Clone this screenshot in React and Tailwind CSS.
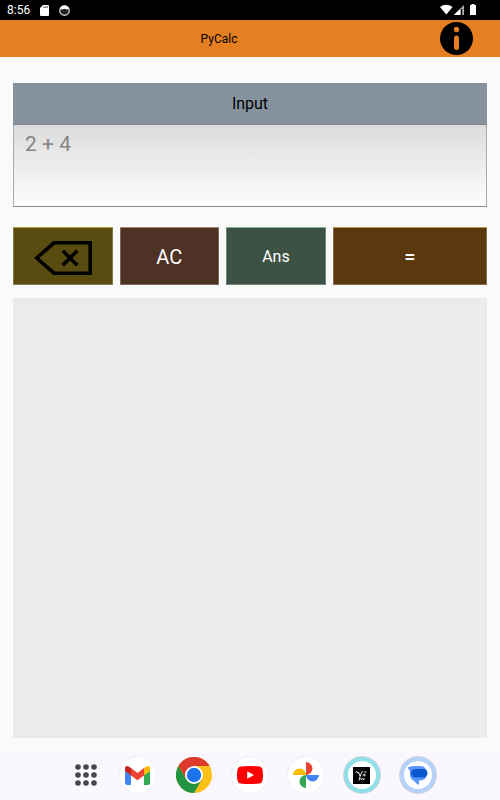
import React, { useState } from 'react';

const StatusBar = () => (
    <div className="flex h-5 items-center justify-between bg-black pl-[7px] pr-6 text-white">
        <div className="flex items-center gap-[10px]">
            <span className="text-[12px] leading-5">8:56</span>
            <svg className="h-[11px] w-[9px]" viewBox="0 0 9 11">
                <path d="M3 0H8Q9 0 9 1V10Q9 11 8 11H1Q0 11 0 10V3Z" fill="#fff" />
                <path d="M4 1.3V3M5.7 1.3V3M7.3 1.3V3" stroke="#222" strokeWidth=".8" />
            </svg>
            <svg className="h-[11px] w-[11px]" viewBox="0 0 11 11">
                <circle cx="5.5" cy="5.5" r="4.7" fill="#222" stroke="#ccc" strokeWidth="1.4" />
                <path d="M1 4A4.8 4.8 0 0 1 10 4L7.5 4.6L5.5 3.8L3.5 4.6Z" fill="#fff" />
            </svg>
        </div>
        <svg className="h-3 w-9" viewBox="0 0 36 12" fill="#fff">
            <path d="M0 3Q6-1.6 12.6 3L6.3 10.5Z" />
            <path d="M14 11L24 1V11Z" fill="#aaa" />
            <path d="M14 11L20.5 4.5V11Z" />
            <path d="M21.5 5V11" stroke="#000" strokeWidth="1.4" />
            <path d="M31.5 0H34.5V1H35.5Q36 1 36 1.5V10.5Q36 11 35.5 11H30.5Q30 11 30 10.5V1.5Q30 1 30.5 1H31.5Z" />
        </svg>
    </div>
);

const Header = () => (
    <header className="flex h-[37px] items-center bg-[#e67f22] pr-[27px]">
        <h1 className="flex-1 pr-[2px] text-center text-[12px] leading-4 text-black">PyCalc</h1>
        <button type="button" aria-label="About">
            <svg className="block h-[33px] w-[33px]" viewBox="0 0 33 33">
                <circle cx="16.5" cy="16.5" r="16.5" />
                <circle cx="16.5" cy="7.5" r="2.7" fill="#e67f22" />
                <rect x="14" y="13.5" width="5" height="14.5" rx="2.5" fill="#e67f22" />
            </svg>
        </button>
    </header>
);

const BackspaceIcon = () => (
    <svg className="h-[34px] w-[58px]" viewBox="0 0 58 34" fill="none" stroke="#000">
        <path d="M2.7 17L20 1.8H56.2V32.2H20Z" strokeWidth="3.6" />
        <path d="M30 11L42 23M42 11L30 23" strokeWidth="3.6" strokeLinecap="square" />
    </svg>
);

const GmailIcon = () => (
    <svg className="h-[19px] w-[25px]" viewBox="0 0 25 19">
        <path d="M0 5L6 9V19H2Q0 19 0 17Z" fill="#4285f4" />
        <path d="M19 9L25 5V17Q25 19 23 19H19Z" fill="#34a853" />
        <path d="M19 2L20.5 1Q25-1.5 25 3V5L19 9.5Z" fill="#fbbc04" />
        <path d="M6 2L12.5 7L19 2V9.5L12.5 14.2L6 9.5Z" fill="#ea4335" />
        <path d="M6 2L4.5 1Q0-1.5 0 3V5L6 9.5Z" fill="#c5221f" />
    </svg>
);

const ChromeIcon = () => (
    <svg className="h-9 w-9" viewBox="0 0 36 36">
        <circle cx="18" cy="18" r="18" fill="#fbc116" />
        <path d="M18 9H33.6A18 18 0 0 0 2.4 9L10.2 22.5Z" fill="#db3a2c" />
        <path d="M10.2 22.5L2.4 9A18 18 0 0 0 18 36L25.8 22.5Z" fill="#229342" />
        <circle cx="18" cy="18" r="9" fill="#fff" />
        <circle cx="18" cy="18" r="7.2" fill="#1a73e8" />
    </svg>
);

const YoutubeIcon = () => (
    <svg className="h-[18px] w-[26px]" viewBox="0 0 26 18">
        <path d="M3.5.5Q13-.5 22.5.5Q25 .8 25.5 3.5Q26.5 9 25.5 14.5Q25 17.2 22.5 17.5Q13 18.5 3.5 17.5Q1 17.2.5 14.5Q-.5 9 .5 3.5Q1 .8 3.5.5Z" fill="#f00" />
        <path d="M10.2 5.2L17 9L10.2 12.8Z" fill="#fff" />
    </svg>
);

const PhotosIcon = () => (
    <svg className="h-[26px] w-[26px]" viewBox="0 0 26 26">
        <path d="M13 0A6.5 6.5 0 0 1 13 13Z" fill="#ea4335" />
        <path d="M26 13A6.5 6.5 0 0 1 13 13Z" fill="#4285f4" />
        <path d="M13 26A6.5 6.5 0 0 1 13 13Z" fill="#34a853" />
        <path d="M0 13A6.5 6.5 0 0 1 13 13Z" fill="#fbbc04" />
    </svg>
);

const PyCalcIcon = () => (
    <svg className="h-[17px] w-[17px]" viewBox="0 0 17 17" fill="none" stroke="#fff">
        <rect width="17" height="17" fill="#000" stroke="none" />
        <path d="M2.5 5.5L4 4.5L5 6.5M5.5 5L7 9L9.5 4M7.5 8L6 13.5" strokeWidth=".9" />
        <path d="M11 5H13.5M9.5 8H13M11.2 6.5V9.5M7.5 11L8.5 13L9.5 11.5L11 13V11" strokeWidth=".8" />
    </svg>
);

const MessagesIcon = () => (
    <svg className="h-[19px] w-5" viewBox="0 0 20 19">
        <path d="M6.5 0H12.5Q18.5 0 18.5 6.5V8Q18.5 14.5 12 14.5H11V18Q10.5 19 9.5 18.5L5.5 14.5Q2 12.5 2 8.5V5L.5 3Q-.5 1 1.5.8Q4 0 6.5 0Z" fill="#5c94ff" />
        <rect x="3" y="3" width="16.5" height="8.5" rx="4.2" fill="#0b57d0" />
    </svg>
);

const dockApps = [
    { name: 'Gmail', icon: GmailIcon, disc: 'h-9 w-9 bg-white ring-1 ring-[#f0eef3]' },
    { name: 'Chrome', icon: ChromeIcon, disc: 'h-9 w-9' },
    { name: 'YouTube', icon: YoutubeIcon, disc: 'h-9 w-9 bg-white ring-1 ring-[#f0eef3]' },
    { name: 'Photos', icon: PhotosIcon, disc: 'h-9 w-9 bg-white ring-1 ring-[#f0eef3]' },
    { name: 'PyCalc', icon: PyCalcIcon, disc: 'h-9 w-9 border-4 border-[#8edfe6] bg-white ring-1 ring-[#cfd4dc]' },
    { name: 'Messages', icon: MessagesIcon, disc: 'h-9 w-9 border-4 border-[#b5d0fb] bg-white ring-1 ring-[#cfd4dc]' },
];

const Dock = () => (
    <nav className="flex items-center justify-center bg-[#faf7ff] py-[5px] pl-3">
        <button type="button" aria-label="All apps" className="mr-[21px]">
            <svg className="h-[22px] w-[22px]" viewBox="0 0 22 22" fill="#45464f">
                {[3, 11, 19].map((y) => [3, 11, 19].map((x) => (
                    <circle key={`${x}-${y}`} cx={x} cy={y} r="2.8" />
                )))}
            </svg>
        </button>
        <div className="flex gap-4">
            {dockApps.map(({ name, icon: Icon, disc }) => (
                <button key={name} type="button" aria-label={name} className="flex h-10 w-10 items-center justify-center">
                    <span className={`${disc} flex shrink-0 items-center justify-center rounded-full`}>
                        <Icon />
                    </span>
                </button>
            ))}
        </div>
    </nav>
);

const App = () => {
    const [input, setInput] = useState('');

    return (
        <div className="flex min-h-screen flex-col bg-[#fafafa] font-['Roboto',sans-serif]">
            <StatusBar />
            <Header />
            <main className="flex flex-1 flex-col px-[13px] pb-3 pt-[26px]">
                {/* Expression */}
                <div className="flex flex-col">
                    <label htmlFor="expression" className="h-[42px] border-b border-[#858585] bg-[#86929e] text-center text-[16px] leading-[42px] text-black">
                        Input
                    </label>
                    <textarea
                        id="expression"
                        value={input}
                        onChange={(e) => setInput(e.target.value)}
                        placeholder="2 + 4"
                        className="block h-[82px] w-full resize-none border border-t-0 border-[#aaa] border-b-[#888] bg-linear-to-b from-[#dcdcdc] to-[#fdfdfd] px-[11px] py-[6px] text-[21px] leading-[26px] text-black outline-none placeholder:text-[#858585]"
                    />
                </div>

                {/* Keys */}
                <div className="mt-5 grid h-[58px] grid-cols-[100fr_100fr_100fr_155fr] gap-[7px] text-white">
                    <button
                        type="button"
                        aria-label="Backspace"
                        onClick={() => setInput(input.slice(0, -1))}
                        className="flex items-center justify-center rounded-[1px] border border-[#857c45] border-t-[#b2a43c] bg-[#584c11] pt-1"
                    >
                        <BackspaceIcon />
                    </button>
                    <button
                        type="button"
                        onClick={() => setInput('')}
                        className="rounded-[1px] border border-[#80675c] border-t-[#b08673] bg-[#4e3225] pt-[2px] text-[20px]"
                    >
                        AC
                    </button>
                    <button
                        type="button"
                        onClick={() => setInput(`${input}Ans`)}
                        className="rounded-[1px] border border-[#70847a] border-t-[#84b49c] bg-[#3c5245] pt-[2px] text-[16px]"
                    >
                        Ans
                    </button>
                    <button type="button" className="rounded-[1px] border border-[#86704f] border-t-[#c7944d] bg-[#59390d] pt-[2px] text-[20px] font-medium">
                        =
                    </button>
                </div>

                {/* Results */}
                <output htmlFor="expression" className="mt-[13px] block flex-1 bg-[#eaebec]" />
            </main>
            <Dock />
        </div>
    );
};

export default App;
